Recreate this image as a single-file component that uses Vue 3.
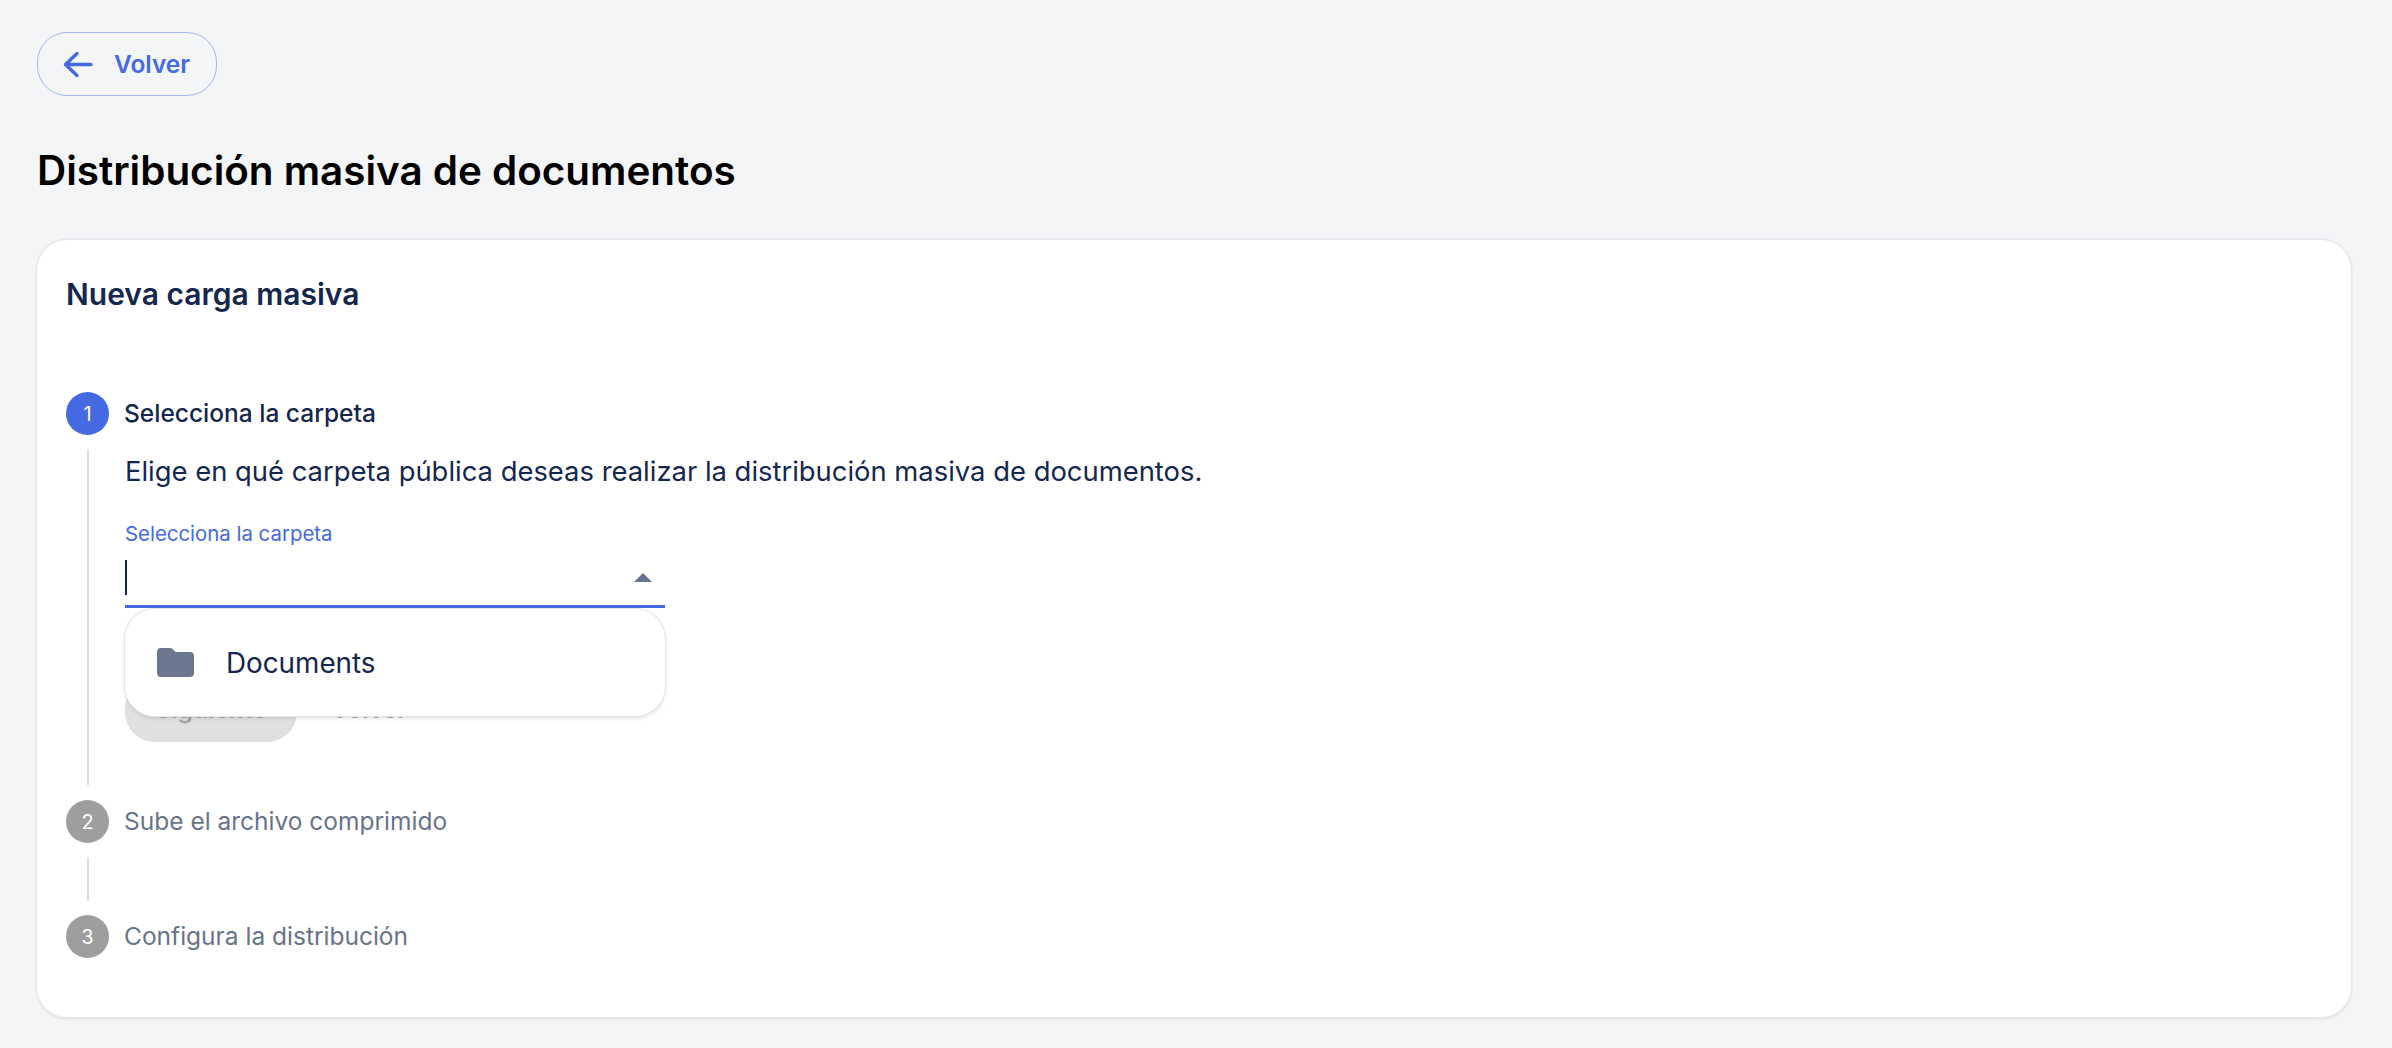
<script setup>
const later = [
  { n: 2, label: 'Sube el archivo comprimido' },
  { n: 3, label: 'Configura la distribución' }
]
</script>

<template>
  <main class="page">
    <button class="back">
      <svg class="back-icon" width="36" height="36" viewBox="0 0 36 36" fill="none">
        <path d="M29 18.500H4M15 7.500 3.500 18.500 15 29.500" stroke="#4469e1" stroke-width="3.400" stroke-linecap="round" stroke-linejoin="round" />
      </svg>
      <span>Volver</span>
    </button>
    <h1 class="title">Distribución masiva de documentos</h1>
    <section class="card">
      <h2 class="card-title">Nueva carga masiva</h2>
      <div class="step-head">
        <span class="dot active">1</span>
        <span class="step-label current">Selecciona la carpeta</span>
      </div>
      <div class="step-body">
        <p class="desc">Elige en qué carpeta pública deseas realizar la distribución masiva de documentos.</p>
        <div class="field">
          <label class="field-label">Selecciona la carpeta</label>
          <div class="input">
            <span class="caret"></span>
            <span class="arrow"></span>
          </div>
          <div class="menu">
            <svg width="44" height="44" viewBox="0 0 44 44" class="folder">
              <path d="M3 11a4 4 0 0 1 4-4h9a4 4 0 0 1 2.800 1.200l2.700 2.800H36a4 4 0 0 1 4 4V32a4 4 0 0 1-4 4H7a4 4 0 0 1-4-4z" fill="#6b778e" />
            </svg>
            <span>Documents</span>
          </div>
        </div>
        <div class="actions">
          <button class="next">Siguiente</button>
          <button class="ghost">Volver</button>
        </div>
      </div>
      <template v-for="(s, i) in later" :key="s.n">
        <div class="step-head">
          <span class="dot">{{ s.n }}</span>
          <span class="step-label">{{ s.label }}</span>
        </div>
        <div v-if="i === 0" class="connector"></div>
      </template>
    </section>
  </main>
</template>

<style>
html, body { margin: 0; background: #f4f5f7; }
</style>

<style scoped>
.page {
  box-sizing: border-box;
  height: 1048px;
  padding: 32px 41px 0 37px;
  background: #f4f5f7;
  font-family: Inter, "Liberation Sans", sans-serif;
  color: #14274e;
}
.back {
  box-sizing: border-box;
  display: flex;
  align-items: center;
  gap: 16px;
  width: 180px;
  height: 64px;
  padding: 0 0 0 24px;
  border: 1.5px solid #a3b5f2;
  border-radius: 30px;
  background: transparent;
  color: #4469e1;
  font: 600 24.500px Inter, sans-serif;
}
.back-icon { flex: none; }
.title {
  margin: 40px 0 35px;
  height: 69px;
  font-size: 40.400px;
  line-height: 69px;
  font-weight: 600;
  color: #000;
}
.card {
  box-sizing: border-box;
  height: 777px;
  padding: 31px 30px 0 29px;
  background: #fff;
  border-radius: 30px;
  box-shadow: 0 0 0 1.5px #e6e7ea, 0 1.500px 3px rgba(0, 0, 0, .12);
}
.card-title {
  margin: 0 0 75px;
  font-size: 30px;
  line-height: 46px;
  font-weight: 600;
}
.step-head {
  display: flex;
  align-items: center;
  gap: 15px;
  height: 43px;
}
.dot {
  flex: none;
  display: flex;
  align-items: center;
  justify-content: center;
  width: 43px;
  height: 43px;
  border-radius: 50%;
  background: #9e9e9e;
  color: #fff;
  font-size: 20px;
}
.dot.active { background: #4469e1; }
.step-label {
  font-size: 24.500px;
  line-height: 42px;
  padding-bottom: 1px;
  color: #677489;
}
.step-label.current {
  color: #14274e;
  font-weight: 500;
  font-size: 24.500px;
}
.step-body {
  box-sizing: border-box;
  height: 336px;
  margin: 14px 0 15px 21px;
  padding-left: 36px;
  border-left: 2px solid #dcdcdc;
}
.desc {
  margin: 0;
  padding-top: 3px;
  font-size: 27.400px;
  line-height: 38px;
}
.field {
  position: relative;
  width: 540px;
  margin-top: 31px;
}
.field-label {
  display: block;
  font-size: 20.400px;
  line-height: 26px;
  color: #4469e1;
}
.input {
  position: relative;
  box-sizing: border-box;
  height: 61px;
  border-bottom: 3px solid #4469e1;
}
.caret {
  position: absolute;
  left: 0;
  top: 13px;
  width: 2px;
  height: 35px;
  background: #14274e;
}
.arrow {
  position: absolute;
  right: 13px;
  top: 26px;
  border-left: 9px solid transparent;
  border-right: 9px solid transparent;
  border-bottom: 9px solid #677489;
}
.menu {
  position: absolute;
  left: 0;
  right: 0;
  top: 88px;
  z-index: 1;
  display: flex;
  align-items: center;
  gap: 28px;
  box-sizing: border-box;
  height: 107px;
  padding-left: 29px;
  background: #fff;
  border-radius: 30px;
  box-shadow: 0 0 0 1px #e4e5e8, 0 2px 4px rgba(0, 0, 0, .14);
  font-size: 27.800px;
}
.folder { flex: none; }
.actions {
  display: flex;
  align-items: center;
  gap: 34px;
  margin-top: 70px;
}
.next {
  width: 172px;
  height: 64px;
  padding: 0 0 3px;
  border: 0;
  border-radius: 30px;
  background: #e0e0e0;
  color: #a6a6a6;
  font: 600 24.500px Inter, sans-serif;
}
.ghost {
  padding: 0 0 3px;
  border: 0;
  background: transparent;
  color: #a6a6a6;
  font: 600 24.500px Inter, sans-serif;
}
.connector {
  width: 2px;
  height: 44px;
  margin: 14px 0 14px 21px;
  background: #dcdcdc;
}
</style>
